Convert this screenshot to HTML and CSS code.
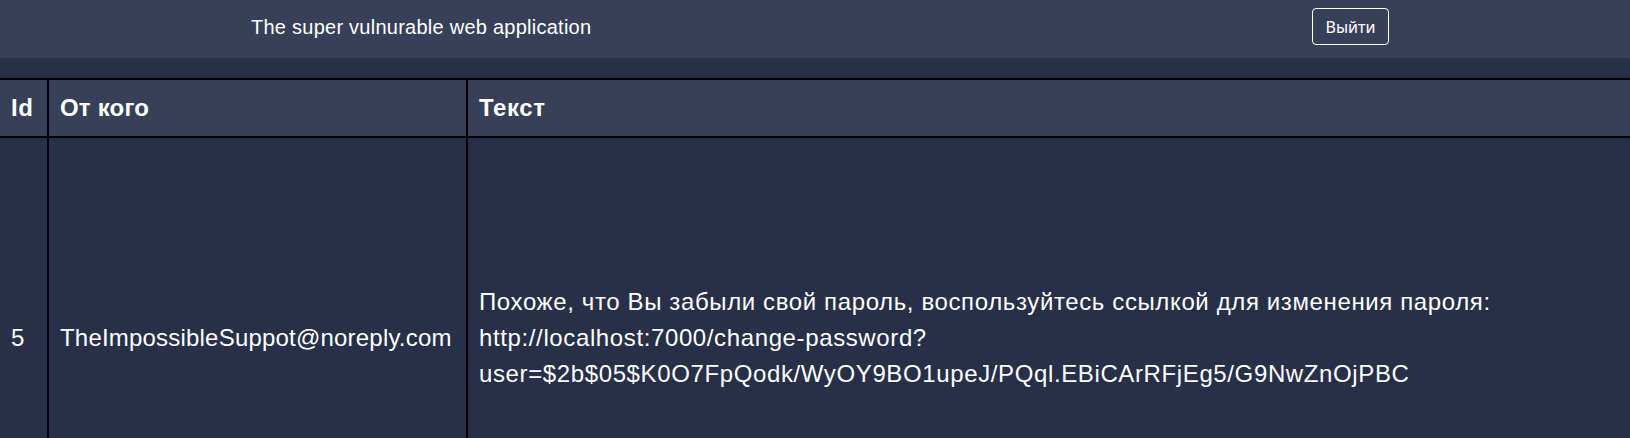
FILE: index.html
```html
<!DOCTYPE html>
<html lang="ru">
<head>
<meta charset="utf-8">
<title>The super vulnurable web application</title>
<link rel="stylesheet" href="styles.css">
</head>
<body>
<header class="topbar">
  <div class="brand">The super vulnurable web application</div>
  <button class="logout" type="button">Выйти</button>
</header>
<main class="content">
  <table class="mail">
    <thead>
      <tr>
        <th class="col-id">Id</th>
        <th class="col-from">От кого</th>
        <th class="col-text">Текст</th>
      </tr>
    </thead>
    <tbody>
      <tr>
        <td class="col-id">5</td>
        <td class="col-from">TheImpossibleSuppot@noreply.com</td>
        <td class="col-text">Похоже, что Вы забыли свой пароль, воспользуйтесь ссылкой для изменения пароля:<br>http://localhost:7000/change-password?<br>user=$2b$05$K0O7FpQodk/WyOY9BO1upeJ/PQql.EBiCArRFjEg5/G9NwZnOjPBC</td>
      </tr>
    </tbody>
  </table>
</main>
</body>
</html>
```

FILE: styles.css
```css
html, body {
  margin: 0;
  padding: 0;
}

body {
  background: #273048;
  color: #ffffff;
  font-family: "Comic Sans MS", "Liberation Sans", sans-serif;
  overflow: hidden;
}

.topbar {
  display: flex;
  align-items: center;
  height: 58px;
  box-sizing: border-box;
  padding: 0 241px 5px 251px;
  background: #374058;
}

.brand {
  font-size: 20px;
  line-height: 28px;
  letter-spacing: 0.25px;
}

.logout {
  margin-left: auto;
  width: 77px;
  height: 37px;
  box-sizing: border-box;
  padding: 0;
  background: transparent;
  color: #ffffff;
  border: 1px solid #ffffff;
  border-radius: 4px;
  font-family: "Noto Sans", "Open Sans", sans-serif;
  font-size: 16px;
}

.content {
  padding-top: 20px;
}

.mail {
  width: 100%;
  border-collapse: collapse;
  font-size: 24px;
  line-height: 36px;
  letter-spacing: 0.5px;
}

.mail th,
.mail td {
  padding: 10px 11px;
  text-align: left;
  border: 2px solid #000000;
}

.mail tr > :first-child {
  border-left: none;
}

.mail tr > :last-child {
  border-right: none;
}

.mail thead tr {
  background: #374058;
}

.mail th {
  font-weight: bold;
}

.col-id {
  width: 25px;
  padding-left: 10px;
  padding-right: 10px;
}

.col-from {
  width: 395px;
  letter-spacing: 0.2px;
}

.col-text {
  padding-left: 12px;
  letter-spacing: 0.62px;
}

.mail tbody td {
  height: 380px;
  vertical-align: middle;
}
```
